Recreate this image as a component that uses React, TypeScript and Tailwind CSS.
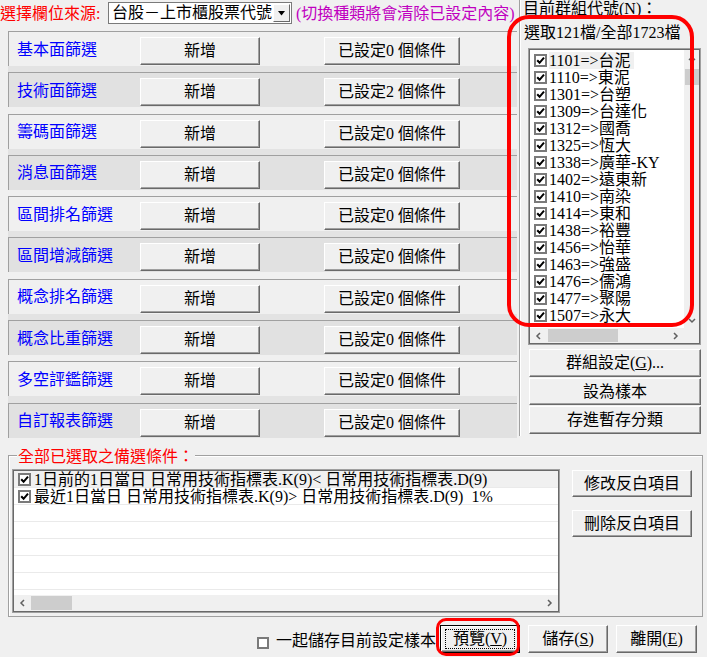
import React from "react";

const rows = [
  ["基本面篩選", "已設定0 個條件"],
  ["技術面篩選", "已設定2 個條件"],
  ["籌碼面篩選", "已設定0 個條件"],
  ["消息面篩選", "已設定0 個條件"],
  ["區間排名篩選", "已設定0 個條件"],
  ["區間增減篩選", "已設定0 個條件"],
  ["概念排名篩選", "已設定0 個條件"],
  ["概念比重篩選", "已設定0 個條件"],
  ["多空評鑑篩選", "已設定0 個條件"],
  ["自訂報表篩選", "已設定0 個條件"],
];

const codes = [
  ["1101", "台泥"],
  ["1110", "東泥"],
  ["1301", "台塑"],
  ["1309", "台達化"],
  ["1312", "國喬"],
  ["1325", "恆大"],
  ["1338", "廣華-KY"],
  ["1402", "遠東新"],
  ["1410", "南染"],
  ["1414", "東和"],
  ["1438", "裕豐"],
  ["1456", "怡華"],
  ["1463", "強盛"],
  ["1476", "儒鴻"],
  ["1477", "聚陽"],
  ["1507", "永大"],
];

function Check({ checked }: { checked: boolean }) {
  return (
    <span className="w-[13px] h-[13px] border-2 border-[#7a7a7a] bg-white inline-flex items-center justify-center shrink-0">
      {checked && (
        <svg width="9" height="9" viewBox="0 0 9 9">
          <path d="M1.2 4.2 L3.6 6.8 L8 1.6" stroke="#000" strokeWidth="2" fill="none" />
        </svg>
      )}
    </span>
  );
}

function Btn({ className, children }: { className: string; children: React.ReactNode }) {
  return (
    <div
      className={
        "flex items-center justify-center bg-[#f0f0f0] border border-t-white border-l-white border-r-[#696969] border-b-[#696969] shadow-[inset_-1px_-1px_0_#a0a0a0] leading-none " +
        className
      }
    >
      {children}
    </div>
  );
}

function Chevron({ dir }: { dir: "up" | "down" | "left" | "right" }) {
  const d =
    dir === "up"
      ? "M1 5 L4 2 L7 5"
      : dir === "down"
      ? "M1 2 L4 5 L7 2"
      : dir === "left"
      ? "M5 1 L2 4 L5 7"
      : "M2 1 L5 4 L2 7";
  return (
    <svg width="8" height="8" viewBox="0 0 8 8">
      <path d={d} stroke="#606060" strokeWidth="1.5" fill="none" />
    </svg>
  );
}

export default function App() {
  return (
    <div className="w-[707px] h-[657px] bg-[#f0f0f0] relative overflow-hidden text-[16px] leading-none text-black font-['Liberation_Serif','Noto_Sans_CJK_TC',serif]">
      {/* top section */}
      <div className="flex h-[446px]">
        {/* left column */}
        <div className="w-[519px] flex flex-col">
          <div className="h-[31px] flex items-start">
            <span className="text-[#ff0000] mt-[5px] leading-[18px] w-[108px] whitespace-nowrap">選擇欄位來源:</span>
            <div className="mt-[2px] w-[184px] h-[22px] bg-white border border-[#7a7a7a] flex items-center">
              <span className="flex-1 pl-[3px] leading-[18px] whitespace-nowrap overflow-hidden">台股－上市櫃股票代號</span>
              <div className="w-[17px] h-[18px] mr-[1px] bg-[#f0f0f0] border border-t-white border-l-white border-r-[#696969] border-b-[#696969] flex items-center justify-center">
                <svg width="8" height="5" viewBox="0 0 8 5">
                  <path d="M0 0 H7 L3.5 4.5 Z" fill="#000" />
                </svg>
              </div>
            </div>
            <span className="ml-[4px] mt-[5px] leading-[18px] text-[#c000c0] whitespace-nowrap">(切換種類將會清除已設定內容)</span>
          </div>
          <div className="ml-[8px] w-[509px] h-[413px] grid grid-rows-[repeat(10,1fr)]">
            {rows.map(([label, status], i) => (
              <div key={label} className="flex flex-col">
                <div
                  className={
                    "h-[35px] border-t border-l border-[#a0a0a0] flex items-start pt-[5px] " +
                    (i % 2 === 0 ? "bg-[#f0f0f0]" : "bg-[#e1e1e1]")
                  }
                >
                  <span className="w-[131px] pl-[8px] self-center text-[#0000ff] whitespace-nowrap leading-[18px] -mt-[4px]">{label}</span>
                  <Btn className="w-[120px] h-[28px]">新增</Btn>
                  <Btn className="ml-[64px] w-[136px] h-[28px] whitespace-nowrap">{status}</Btn>
                </div>
                <div className={"flex-1 " + (i % 2 === 0 ? "bg-[#e3e3e3]" : "")} />
              </div>
            ))}
          </div>
        </div>

        {/* divider */}
        <div className="w-[2px] h-[436px] border-l border-[#a0a0a0] border-r border-r-white" />

        {/* right column */}
        <div className="flex-1 flex flex-col">
          <div className="pl-[2px] leading-[17px] whitespace-nowrap">
            目前群組代號(<span className="underline">N</span>)：
          </div>
          <div className="pl-[3px] mt-[7px] leading-[18px] whitespace-nowrap">選取121檔/全部1723檔</div>
          <div className="ml-[7px] mt-[6px] w-[173px] h-[297px] border border-[#a0a0a0] bg-white">
            <div className="w-full h-full border border-[#696969] flex flex-col">
              <div className="flex-1 flex">
                <div className="flex-1 pt-[2px] overflow-hidden">
                  {codes.map(([c, n], i) => (
                    <div key={c} className="h-[17px] flex items-center pl-[4px]">
                      <Check checked />
                      <span
                        className={
                          "ml-[2px] leading-[17px] whitespace-nowrap pr-[4px] " + (i === 0 ? "bg-[#f0f0f0]" : "")
                        }
                      >
                        {c}=&gt;{n}
                      </span>
                    </div>
                  ))}
                </div>
                <div className="w-[15px] bg-[#f0f0f0] flex flex-col items-center">
                  <div className="h-[17px] flex items-center justify-center">
                    <Chevron dir="up" />
                  </div>
                  <div className="mt-[2px] w-[14px] h-[16px] bg-[#cdcdcd]" />
                  <div className="flex-1" />
                  <div className="h-[15px] flex items-center justify-center">
                    <Chevron dir="down" />
                  </div>
                </div>
              </div>
              <div className="h-[15px] flex bg-[#f0f0f0]">
                <div className="flex-1 flex items-center">
                  <div className="w-[17px] flex items-center justify-center">
                    <Chevron dir="left" />
                  </div>
                  <div className="ml-[1px] w-[70px] h-[13px] bg-[#cdcdcd]" />
                  <div className="flex-1" />
                  <div className="w-[17px] flex items-center justify-center">
                    <Chevron dir="right" />
                  </div>
                </div>
                <div className="w-[15px]" />
              </div>
            </div>
          </div>
          <div className="ml-[8px] mt-[4px] w-[172px] flex flex-col gap-[1px]">
            <Btn className="h-[28px] whitespace-nowrap">
              群組設定(<span className="underline">G</span>)...
            </Btn>
            <Btn className="h-[27px]">設為樣本</Btn>
            <Btn className="h-[28px]">存進暫存分類</Btn>
          </div>
        </div>
      </div>

      {/* group box */}
      <div className="relative ml-[8px] mt-[9px] w-[695px] h-[162px] border border-[#a0a0a0] shadow-[inset_1px_1px_0_#ffffff] flex items-start pl-[3px] pt-[13px]">
        <span className="absolute -top-[8px] left-[8px] px-[1px] bg-[#f0f0f0] text-[#ff0000] leading-[18px] whitespace-nowrap">
          全部已選取之備選條件：
        </span>
        <div className="w-[548px] h-[144px] border border-[#a0a0a0] bg-white">
          <div className="w-full h-full border border-[#696969] flex flex-col">
            <div className="flex-1 overflow-hidden">
              {[
                "1日前的1日當日 日常用技術指標表.K(9)< 日常用技術指標表.D(9)",
                "最近1日當日 日常用技術指標表.K(9)> 日常用技術指標表.D(9)\u00a0\u00a01%",
                "",
                "",
                "",
                "",
                "",
              ].map((t, i) => (
                <div
                  key={i}
                  className={
                    "h-[17px] flex items-center pl-[4px] border-b border-[#eaeaea] " + (i === 0 ? "bg-[#f0f0f0]" : "")
                  }
                >
                  {t && <Check checked />}
                  {t && <span className="ml-[3px] leading-[17px] whitespace-pre">{t}</span>}
                </div>
              ))}
            </div>
            <div className="h-[16px] flex items-center bg-[#f0f0f0]">
              <div className="w-[17px] flex items-center justify-center">
                <Chevron dir="left" />
              </div>
              <div className="w-[41px] h-[14px] bg-[#cdcdcd]" />
              <div className="flex-1" />
              <div className="w-[17px] flex items-center justify-center">
                <Chevron dir="right" />
              </div>
            </div>
          </div>
        </div>
        <div className="ml-[12px] flex flex-col gap-[13px] pt-[1px]">
          <Btn className="w-[120px] h-[27px]">修改反白項目</Btn>
          <Btn className="w-[120px] h-[27px]">刪除反白項目</Btn>
        </div>
      </div>

      {/* bottom bar */}
      <div className="flex items-start pl-[257px] pt-[8px]">
        <span className="mt-[12px] w-[12px] h-[12px] border-2 border-[#7a7a7a] bg-white shrink-0" />
        <span className="ml-[7px] mt-[7px] w-[160px] leading-[18px] whitespace-nowrap">一起儲存目前設定樣本</span>
        <div className="ml-[4px] w-[80px] h-[28px] border border-black">
          <Btn className="w-full h-full">
            <div className="w-[70px] h-[20px] border border-dotted border-black flex items-center justify-center">
              預覽(<span className="underline">V</span>)
            </div>
          </Btn>
        </div>
        <Btn className="ml-[8px] w-[80px] h-[28px]">
          儲存(<span className="underline">S</span>)
        </Btn>
        <Btn className="ml-[8px] w-[81px] h-[28px]">
          離開(<span className="underline">E</span>)
        </Btn>
      </div>

      {/* annotations */}
      <div className="absolute left-[507px] top-[15px] w-[187px] h-[312px] border-[4px] border-[#ff0000] rounded-[22px] pointer-events-none" />
      <div className="absolute left-[436px] top-[618px] w-[84px] h-[38px] border-[3px] border-[#ff0000] rounded-[10px] pointer-events-none" />
    </div>
  );
}
